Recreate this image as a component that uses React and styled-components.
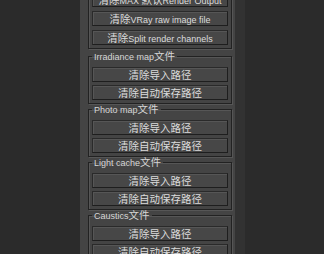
import React from 'react'
import styled, { createGlobalStyle } from 'styled-components'

const Global = createGlobalStyle`
  html, body {
    margin: 0;
    padding: 0;
    background: #2b2b2b;
    overflow: hidden;
  }
  body {
    font-family: "Liberation Sans", "Noto Sans CJK SC", sans-serif;
  }
`

const Page = styled.div`
  display: flex;
  height: 254px;
  width: 324px;
  overflow: hidden;
`

const Side = styled.div`
  width: 80px;
  flex-shrink: 0;
  background: #2b2b2b;
`

const Panel = styled.div`
  width: 155px;
  flex-shrink: 0;
  background: #444444;
  display: flex;
  flex-direction: column;
  margin-top: -8px;
  padding-left: 8px;
  padding-right: 3px;
  box-sizing: border-box;
`

const Scroll = styled.div`
  width: 10px;
  flex-shrink: 0;
  background: #323232;
`

const Group = styled.fieldset`
  margin: 0;
  padding: 0 3px 3px 3px;
  border: 1px solid #222222;
  box-shadow: inset 1px 1px 0 #565656, 1px 1px 0 #565656;
  display: flex;
  flex-direction: column;
  gap: 3px;
  min-width: 0;
  &:first-child {
    border-top: none;
    gap: 4px;
    margin-bottom: 2px;
  }
`

const Legend = styled.legend`
  font-family: "Liberation Sans", sans-serif;
  font-size: 9px;
  line-height: 10px;
  height: 10px;
  color: #d6d6d6;
  padding: 0 2px;
  margin-bottom: 6px;
  white-space: nowrap;
`

const Button = styled.button`
  font-family: "Liberation Sans", sans-serif;
  font-size: 9px;
  line-height: 13px;
  height: 15px;
  padding: 0;
  color: #dcdcdc;
  background: #474747;
  border: 1px solid #1e1e1e;
  border-top-color: #2a2a2a;
  border-left-color: #2a2a2a;
  box-shadow: inset 1px 1px 0 #565656;
  white-space: nowrap;
  overflow: hidden;
  text-align: center;
  border-radius: 0;
`

const Han = styled.span`
  font-family: "Noto Sans CJK SC", sans-serif;
  font-size: 10.5px;
`

// split a label into CJK and latin runs so each gets its own size
const Label = ({ text }) =>
  text.split(/([\u4e00-\u9fff]+)/).filter(Boolean).map((part, i) =>
    /[\u4e00-\u9fff]/.test(part) ? <Han key={i}>{part}</Han> : <span key={i}>{part}</span>
  )

const groups = [
  { title: 'Irradiance map文件' },
  { title: 'Photo map文件' },
  { title: 'Light cache文件' },
  { title: 'Caustics文件' },
]

export default function App() {
  return (
    <Page>
      <Global />
      <Side />
      <Panel>
        <Group>
          <Button><Label text="清除MAX 默认Render Output" /></Button>
          <Button><Label text="清除VRay raw image file" /></Button>
          <Button><Label text="清除Split render channels" /></Button>
        </Group>
        {groups.map((g) => (
          <Group key={g.title}>
            <Legend><Label text={g.title} /></Legend>
            <Button><Label text="清除导入路径" /></Button>
            <Button><Label text="清除自动保存路径" /></Button>
          </Group>
        ))}
      </Panel>
      <Scroll />
    </Page>
  )
}
